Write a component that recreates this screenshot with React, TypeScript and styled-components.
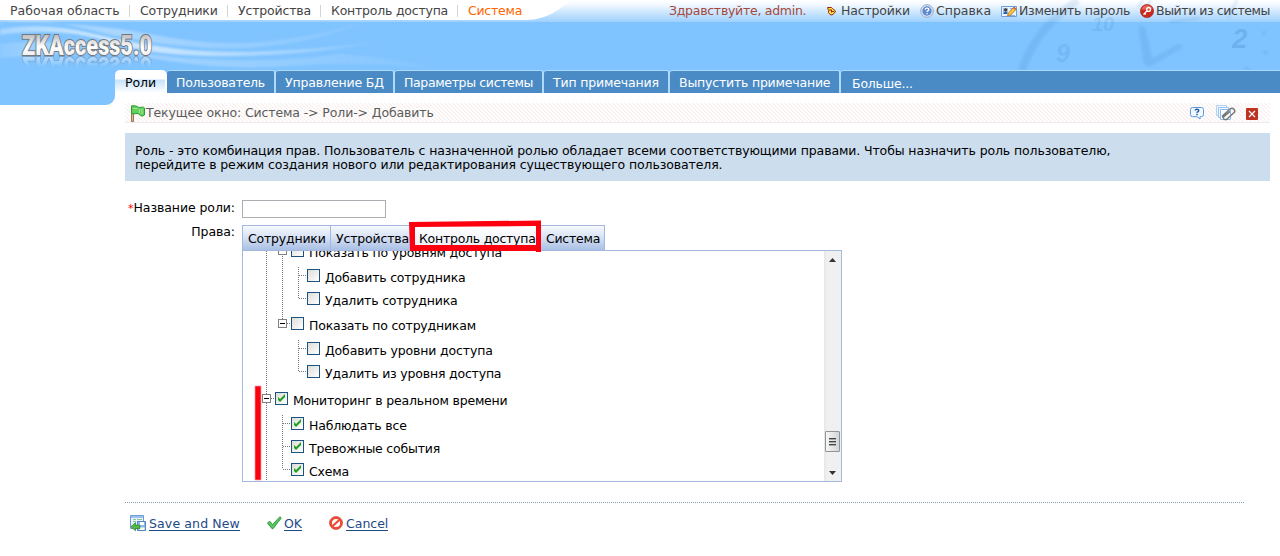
import { ReactNode } from "react";
import styled, { createGlobalStyle, css } from "styled-components";

const GlobalStyle = createGlobalStyle`
  * {
    box-sizing: border-box;
  }
  body {
    margin: 0;
    background: #ffffff;
    font-family: Verdana, "DejaVu Sans", sans-serif;
    font-size: 12.5px;
    line-height: 15px;
    color: #000000;
  }
  ul {
    margin: 0;
    padding: 0;
    list-style: none;
  }
  svg {
    display: block;
    flex: none;
  }
`;

const Page = styled.div`
  width: 1280px;
  height: 556px;
  overflow: hidden;
`;

/* header */

const Header = styled.header`
  position: relative;
  height: 93px;
  display: flex;
  flex-direction: column;
  background: #7fc3ff;
`;

const HeaderArt = styled.svg`
  position: absolute;
  top: 0;
  left: 0;
`;

const TopBar = styled.div`
  position: relative;
  height: 22px;
  display: flex;
  justify-content: space-between;
  padding: 3px 10px 0 0;
`;

const Menu = styled.nav`
  display: flex;
  align-items: flex-start;
`;

const MenuItem = styled.a<{ $w: number; $ls?: number; $active?: boolean }>`
  width: ${(props) => props.$w}px;
  padding-left: 10px;
  white-space: nowrap;
  letter-spacing: ${(props) => props.$ls || 0}px;
  color: ${(props) => (props.$active ? "#ff6600" : "#444444")};
`;

const Divider = styled.i`
  width: 1px;
  height: 12px;
  margin-top: 2px;
  background: #d3d3d3;
`;

const UserMenu = styled.div`
  display: flex;
  align-items: flex-start;
`;

const Hello = styled.span`
  width: 157px;
  color: #a5493c;
  letter-spacing: -0.27px;
  white-space: nowrap;
`;

const UserLink = styled.a<{ $w: number; $gap: number; $ls: number }>`
  display: flex;
  width: ${(props) => props.$w}px;
  gap: ${(props) => props.$gap}px;
  color: #444444;
  letter-spacing: ${(props) => props.$ls}px;
  white-space: nowrap;
`;

const LogoBox = styled.div`
  position: relative;
  height: 48px;
  padding: 8px 0 0 20px;
`;

const TabBar = styled.nav`
  position: relative;
  display: flex;
  height: 23px;
  margin-left: 115px;
  color: #ffffff;
`;

const Tab = styled.a<{ $w: number; $ls: number; $active?: boolean }>`
  width: ${(props) => props.$w}px;
  padding: 4px 0 0 9px;
  white-space: nowrap;
  letter-spacing: ${(props) => props.$ls}px;
  background: #4a8bc5;
  border-top: 1px solid #aedaff;
  border-right: 2px solid #aedaff;
  border-radius: 3px 3px 0 0;
  ${(props) =>
    props.$active &&
    css`
      color: #000000;
      padding-left: 10px;
      border-color: #ffffff;
      border-radius: 5px 5px 0 0;
      background: linear-gradient(#ffffff 0 8px, #c5e2fb 9px, #ffffff);
    `}
`;

const MoreTab = styled.a`
  flex: 1;
  padding: 5px 0 0 11px;
  letter-spacing: -0.2px;
  background: #4a8bc5;
  border-top: 1px solid #aedaff;
  border-radius: 3px 0 0 0;
`;

const Notch = styled.div`
  width: 115px;
  height: 12px;
  background: #7fc3ff;
  border-radius: 0 0 9px 0;
`;

/* content */

const Content = styled.main`
  margin: -2px 10px 0 125px;
`;

const Crumb = styled.div`
  display: flex;
  align-items: flex-start;
  height: 20px;
  padding: 2px 12px 0 5px;
  color: #5b5b5b;
  letter-spacing: -0.12px;
  background: repeating-linear-gradient(45deg, #fff 0 1.414px, #faf3f1 1.414px 2.828px);
  border-bottom: 1px solid #ececec;
`;

const CrumbText = styled.span`
  flex: 1;
`;

const CrumbTools = styled.div`
  display: flex;
  gap: 10px;
`;

const Info = styled.p`
  height: 48px;
  margin: 10px 0 0;
  padding: 11px 10px 0;
  line-height: 14px;
  letter-spacing: -0.115px;
  background: #ccddee;
`;

const Field = styled.div`
  display: flex;
`;

const FieldLabel = styled.label`
  width: 117px;
  padding-right: 7px;
  text-align: right;
  letter-spacing: -0.08px;
  white-space: nowrap;
`;

const Required = styled.span`
  color: #ff0000;
  font-size: 11px;
`;

const NameField = styled(Field)`
  height: 25px;
  margin-top: 19px;
`;

const Input = styled.input`
  width: 144px;
  height: 18px;
  border: 1px solid #abadb3;
  padding: 0;
`;

const RightsBox = styled.div`
  position: relative;
`;

const RightsLabel = styled(FieldLabel)`
  margin-top: -1px;
`;

const RightsTabs = styled.div`
  display: flex;
  height: 25px;
`;

const RightsTab = styled.a<{ $w: number; $ls: number; $active?: boolean }>`
  width: ${(props) => props.$w}px;
  padding: 5px 0 0 5px;
  letter-spacing: ${(props) => props.$ls}px;
  white-space: nowrap;
  border: 1px solid #a3b8dc;
  border-width: 1px 1px 0 0;
  background: ${(props) =>
    props.$active ? "linear-gradient(#ffffff, #e9ecf6)" : "linear-gradient(#f6f9fe, #d5e0f3 50%, #a9bfe5)"};
  &:first-child {
    border-left-width: 1px;
  }
`;

const Panel = styled.div`
  display: flex;
  width: 600px;
  height: 232px;
  overflow: hidden;
  border: 1px solid #a3b8dc;
`;

const Marks = styled.svg`
  position: absolute;
  top: -5px;
  left: 0;
`;

const dots = css`
  background-image: linear-gradient(#777 50%, transparent 50%);
  background-size: 1px 2px;
`;

const Tree = styled.ul`
  position: relative;
  flex: 1;
  height: 246px;
  margin-top: -14px;
  padding-left: 19px;
  &::before {
    content: "";
    position: absolute;
    left: 23px;
    top: 0;
    bottom: 0;
    width: 1px;
    ${dots}
  }
`;

const Branch = styled.ul<{ $tail?: number }>`
  position: relative;
  margin-left: 16px;
  padding: 2px 0;
  &::before {
    content: "";
    position: absolute;
    left: 4px;
    top: 5px;
    bottom: ${(props) => props.$tail ?? 14}px;
    width: 1px;
    ${dots}
  }
`;

const NodeRow = styled.div`
  position: relative;
  display: flex;
  align-items: center;
  height: 23px;
`;

const Toggle = styled.i`
  display: flex;
  align-items: center;
  justify-content: center;
  width: 9px;
  height: 9px;
  border: 1px solid #808080;
  background: #ffffff;
  &::after {
    content: "";
    width: 5px;
    height: 1px;
    background: #000000;
  }
`;

const Stem = styled.i<{ $leaf: boolean }>`
  width: ${(props) => (props.$leaf ? 8 : 4)}px;
  height: 1px;
  margin-left: ${(props) => (props.$leaf ? 5 : 0)}px;
  background-image: linear-gradient(90deg, #777 50%, transparent 50%);
  background-size: 2px 1px;
`;

const Box = styled.span`
  width: 13px;
  height: 13px;
  margin-right: 5px;
  border: 1px solid #1c5180;
  background: linear-gradient(135deg, #dcdcd7, #ffffff);
`;

const NodeText = styled.span<{ $ls?: number }>`
  padding-top: 3px;
  white-space: nowrap;
  letter-spacing: ${(props) => props.$ls ?? -0.19}px;
`;

const Scrollbar = styled.div`
  display: flex;
  flex-direction: column;
  align-items: center;
  width: 17px;
  padding: 7px 1px 6px 0;
  background: linear-gradient(90deg, #e6e6e6, #f0f0f0 3px, #f0f0f0);
`;

const Thumb = styled.div`
  display: flex;
  flex-direction: column;
  align-items: center;
  justify-content: center;
  gap: 1px;
  width: 15px;
  height: 21px;
  margin: auto 0 19px;
  border: 1px solid #8f9494;
  border-radius: 1px;
  background: linear-gradient(90deg, #f7f7f7, #d3d5d4);
`;

const Grip = styled.i`
  width: 7px;
  height: 2px;
  background: linear-gradient(#3f4444 50%, #a8a8a8 50%);
`;

const Actions = styled.footer`
  display: flex;
  width: 1119px;
  margin-top: 20px;
  padding: 13px 0 0 5px;
  background: repeating-linear-gradient(90deg, #8b9cb8 0 1px, transparent 1px 2px) top / 100% 1px no-repeat;
`;

const Action = styled.a<{ $w: number; $gap: number }>`
  display: flex;
  gap: ${(props) => props.$gap}px;
  width: ${(props) => props.$w}px;
  color: #1e4a86;
  white-space: nowrap;
`;

const ActionText = styled.span<{ $ls?: number }>`
  height: 15px;
  margin-top: 1px;
  letter-spacing: ${(props) => props.$ls || 0}px;
  border-bottom: 1px solid #1e4a86;
`;

/* icons */

const SettingsIcon = () => (
  <svg width="14" height="16" viewBox="0 0 14 16">
    <path d="M1.500 4.500h4l1 1 3 2.500-1 2-2.500 2-2-.5-1.500-2v-2z" fill="#ffe93b" stroke="#a5200c" />
    <path d="M3 7h2M5 8.500h3M5.500 6.500v3" fill="none" stroke="#a5200c" />
  </svg>
);

const HelpIcon = () => (
  <svg width="14" height="16" viewBox="0 0 14 16">
    <circle cx="7" cy="8" r="6.300" fill="#dfe8f5" stroke="#96a9c4" />
    <circle cx="7" cy="8" r="4.700" fill="#5c8ad0" />
    <path d="M5.200 6.700q.2-1.700 1.900-1.600 1.800.1 1.700 1.500-.1.900-1.700 1.700v.6M7.100 10v1.300" fill="none" stroke="#fff" strokeWidth="1.300" />
  </svg>
);

const PasswordIcon = () => (
  <svg width="16" height="16" viewBox="0 0 16 16">
    <path d="M.5 3.500h15v10H.5z" fill="#e9f2ff" stroke="#6f9ddb" />
    <path d="M2 5h5v6H2z" fill="#8fc2f4" />
    <path d="M2.500 11q0-2.500 2-2.500t2 2.500z" fill="#355f9e" />
    <circle cx="4.600" cy="6.800" r="1.600" fill="#573111" />
    <path d="M9 5.500h5M9 12.500h5" stroke="#88aee0" />
    <path d="M6.500 13l1-3L13 4l2.300 2-5.600 6z" fill="#ffc841" stroke="#a8640e" strokeWidth=".8" />
    <path d="M12 5l2.300 2 1-1L13 4z" fill="#e0573f" />
  </svg>
);

const LogoutIcon = () => (
  <svg width="14" height="16" viewBox="0 0 14 16">
    <circle cx="7" cy="8" r="6.600" fill="#c92a20" stroke="#a31c14" strokeWidth=".6" />
    <path d="M1.400 6.500Q2.500 2.300 7 2.300t5.600 4Q7 7 1.400 6.500z" fill="#ee786d" opacity=".7" />
    <circle cx="8.600" cy="6.400" r="1.900" fill="none" stroke="#fff" strokeWidth="1.300" />
    <path d="M7.200 7.800L3.500 11.500M4.500 10.300l1.200 1.200" stroke="#fff" strokeWidth="1.300" />
  </svg>
);

const FlagIcon = () => (
  <svg width="16" height="17" viewBox="0 0 16 17">
    <path d="M1.500 1h2v15.500h-2z" fill="#d9b79b" stroke="#8c5a35" strokeWidth=".8" />
    <path d="M1.500 1Q5 .2 7 1.400t2 1.100l3-.3q2-.2 2.500.8V10q-2 1.800-4 .6L8 8.500l-6.500.4z" fill="#63cf5c" stroke="#2f9a3a" />
    <path d="M3.500 3.500h4M9.500 4v4M12 4v5" stroke="#a3e898" />
  </svg>
);

const BubbleIcon = () => (
  <svg width="16" height="16" viewBox="0 0 16 16">
    <path d="M3.500 2.500h9q2 0 2 2v5q0 2-2 2.200h-1.500V14l-3-2.300H3.500q-2 0-2-2.200v-5q0-2 2-2z" fill="#f2f8ff" stroke="#5b9bdd" />
    <path d="M6.200 5.500q0-1.300 1.900-1.200 1.800.1 1.700 1.400Q9.600 6.700 8 7.300v.5M8 8.800v1.400" fill="none" stroke="#21599b" strokeWidth="1.400" />
  </svg>
);

const AttachIcon = () => (
  <svg width="21" height="17" viewBox="0 0 21 17">
    <path d="M1.500.5h10v10h-10z" fill="#eef6ff" stroke="#b4d4f4" />
    <path d="M3.500 2.500h10v10h-10z" fill="#eef6ff" stroke="#9cc6f0" />
    <path d="M5.500 4.500h10v10h-10z" fill="#fafdff" stroke="#8abbee" />
    <path d="M8 12.500l-.5-1.500L15 4q2-1.500 4 .3 1.700 2-.2 3.500l-7 6.400q-1.800 1.200-3-.3-1-1.500.3-2.500l6-5" fill="none" stroke="#777" strokeWidth="1.500" />
  </svg>
);

const CloseIcon = () => (
  <svg width="12" height="16" viewBox="0 0 12 16">
    <rect y="3" width="12" height="12" rx="1" fill="#bd3322" />
    <path d="M3 6l6 6M9 6l-6 6" stroke="#fff" strokeWidth="1.200" />
  </svg>
);

const SaveIcon = () => (
  <svg width="16" height="17" viewBox="0 0 16 17">
    <path d="M.5.500h13v13H.5z" fill="#e8f3ff" stroke="#6e9cd6" />
    <path d="M1 1h12v2H1z" fill="#9cc3ee" />
    <path d="M3 4.500h3M7 4.500h5M3 6.500h3M7 6.500h5" stroke="#8fc592" />
    <path d="M7.500 6.500h8v9h-8z" fill="#8db9ef" stroke="#5585c4" />
    <path d="M10 7h4v3h-4zM9.500 12.500h5v2.500h-5z" fill="#fff" />
    <path d="M.8 11.700l4.700-4v2.400h4.400v3.400H5.500v2.200z" fill="#53b848" stroke="#2f8b2c" strokeWidth=".8" />
  </svg>
);

const OkIcon = () => (
  <svg width="16" height="16" viewBox="0 0 16 16">
    <path d="M.5 8.200l2-2.200 3 3.500L13 1.700l1.200 1.500L6 13.700H5z" fill="#58c561" stroke="#2b9438" strokeWidth=".9" />
  </svg>
);

const CancelIcon = () => (
  <svg width="14" height="16" viewBox="0 0 14 16">
    <circle cx="7" cy="8" r="5.300" fill="#fff" stroke="#ee4c35" strokeWidth="2.400" />
    <circle cx="7" cy="8" r="6.500" fill="none" stroke="#c23322" strokeWidth=".6" />
    <path d="M3.500 11.300L10.500 4.700" stroke="#ee4c35" strokeWidth="2.200" />
  </svg>
);

const Check = () => (
  <svg width="11" height="11" viewBox="0 0 11 11">
    <path d="M2 4v3l2 2 5-5V1L4 6z" fill="#21a121" />
  </svg>
);

const Logo = () => (
  <svg width="140" height="38" viewBox="0 0 140 38">
    <defs>
      <linearGradient id="metal" x1="0" y1="0" x2="0" y2="1">
        <stop offset=".2" stopColor="#c4c4c6" />
        <stop offset=".55" stopColor="#fff" />
        <stop offset="1" stopColor="#e4e4e4" />
      </linearGradient>
      <linearGradient id="fade" gradientUnits="userSpaceOnUse" x1="0" y1="25" x2="0" y2="14">
        <stop offset="0" stopColor="#fff" stopOpacity=".5" />
        <stop offset="1" stopColor="#fff" stopOpacity="0" />
      </linearGradient>
      <mask id="mirror">
        <rect width="140" height="30" fill="url(#fade)" />
      </mask>
    </defs>
    <text
      id="brand"
      x="2"
      y="24.500"
      textLength="130"
      lengthAdjust="spacingAndGlyphs"
      fontFamily="Impact, Roboto, sans-serif"
      fontWeight="900"
      fontSize="27"
      fill="url(#metal)"
      stroke="#74777d"
      strokeWidth="2"
      paintOrder="stroke"
    >
      ZKAccess5.0
    </text>
    <g transform="translate(0 51) scale(1 -1)">
      <use href="#brand" mask="url(#mirror)" />
    </g>
  </svg>
);

const Backdrop = () => (
  <HeaderArt width="1280" height="93" viewBox="0 0 1280 93">
    <defs>
      <linearGradient id="sky" x1="0" y1="0" x2="0" y2="1">
        <stop offset="0" stopColor="#fff" />
        <stop offset=".2" stopColor="#f3f9ff" />
        <stop offset="1" stopColor="#9dd0fd" />
      </linearGradient>
      <linearGradient id="wave" x1="0" x2="1">
        <stop offset="0" stopColor="#fff" stopOpacity=".3" />
        <stop offset=".3" stopColor="#fff" stopOpacity=".65" />
        <stop offset="1" stopColor="#fff" stopOpacity=".1" />
      </linearGradient>
      <filter id="soft">
        <feGaussianBlur stdDeviation="1.200" />
      </filter>
    </defs>
    <rect width="1280" height="22" fill="url(#sky)" />
    <g fill="url(#wave)" filter="url(#soft)">
      <path d="M0 29Q45 22 90 33T180 49T290 50T382 41Q320 54 240 56T110 42T0 35z" />
      <path d="M0 22Q90 22 150 34T260 42T370 20Q310 46 240 48T90 30T0 26z" opacity=".5" />
      <path d="M40 28Q120 55 200 59T340 54Q400 58 440 70Q370 60 290 66T120 52z" opacity=".4" />
      <path d="M0 44Q30 40 70 43T150 54Q80 50 0 58z" opacity=".4" />
    </g>
    <path d="M0 0H572C560 7 550 20 525 20H0z" fill="#fff" />
    <g fill="#2c79b7" stroke="#2c79b7" opacity=".12" filter="url(#soft)">
      <path d="M1022 70Q1036 28 1078 0" fill="none" strokeWidth="8" />
      <path d="M1139 27q5-2 6 2l7 30 27-15 4 3-33 19q-5 0-6-4z" />
      <path d="M1262 34l4-2M1263 52l5 1M1170 22l30-4M1244 68l6 2M1228 18l9-18M1138 8l5-8M1146 8l5-8" strokeWidth="3" />
    </g>
    <g fill="#2c79b7" opacity=".22" fontFamily="Liberation Sans" fontStyle="italic" fontWeight="bold">
      <text x="1056" y="62" fontSize="25" opacity=".6">9</text>
      <text x="1092" y="31" fontSize="20" opacity=".6">10</text>
      <text x="1232" y="48" fontSize="28">2</text>
    </g>
  </HeaderArt>
);

interface INode {
  text: string;
  ls?: number;
  checked?: boolean;
  children?: ReactNode;
}

function Node({ text, ls, checked, children }: INode) {
  return (
    <li>
      <NodeRow>
        {children && <Toggle />}
        <Stem $leaf={!children} />
        <Box>{checked && <Check />}</Box>
        <NodeText $ls={ls}>{text}</NodeText>
      </NodeRow>
      {children && <Branch>{children}</Branch>}
    </li>
  );
}

function App() {
  return (
    <Page>
      <GlobalStyle />
      <Header>
        <Backdrop />
        <TopBar>
          <Menu>
            <MenuItem $w={129}>Рабочая область</MenuItem>
            <Divider />
            <MenuItem $w={97} $ls={-0.2}>Сотрудники</MenuItem>
            <Divider />
            <MenuItem $w={92} $ls={-0.17}>Устройства</MenuItem>
            <Divider />
            <MenuItem $w={136} $ls={-0.22}>Контроль доступа</MenuItem>
            <Divider />
            <MenuItem $w={80} $ls={-0.25} $active>Система</MenuItem>
          </Menu>
          <UserMenu>
            <Hello>Здравствуйте, admin.</Hello>
            <UserLink $w={94} $gap={1} $ls={-0.18}><SettingsIcon />Настройки</UserLink>
            <UserLink $w={81} $gap={2} $ls={0}><HelpIcon />Справка</UserLink>
            <UserLink $w={139} $gap={2} $ls={-0.25}><PasswordIcon />Изменить пароль</UserLink>
            <UserLink $w={130} $gap={2} $ls={-0.43}><LogoutIcon />Выйти из системы</UserLink>
          </UserMenu>
        </TopBar>
        <LogoBox>
          <Logo />
        </LogoBox>
        <TabBar>
          <Tab $w={52} $ls={-0.1} $active>Роли</Tab>
          <Tab $w={109} $ls={-0.26}>Пользователь</Tab>
          <Tab $w={119} $ls={-0.14}>Управление БД</Tab>
          <Tab $w={149} $ls={-0.35}>Параметры системы</Tab>
          <Tab $w={126} $ls={-0.16}>Тип примечания</Tab>
          <Tab $w={171} $ls={-0.2}>Выпустить примечание</Tab>
          <MoreTab>Больше...</MoreTab>
        </TabBar>
      </Header>
      <Notch />
      <Content>
        <Crumb>
          <FlagIcon />
          <CrumbText>Текущее окно: Система -&gt; Роли-&gt; Добавить</CrumbText>
          <CrumbTools>
            <BubbleIcon />
            <AttachIcon />
            <CloseIcon />
          </CrumbTools>
        </Crumb>
        <Info>
          Роль - это комбинация прав. Пользователь с назначенной ролью обладает всеми соответствующими правами. Чтобы назначить роль пользователю,
          <br />
          перейдите в режим создания нового или редактирования существующего пользователя.
        </Info>
        <NameField>
          <FieldLabel><Required>*</Required>Название роли:</FieldLabel>
          <Input />
        </NameField>
        <Field>
          <RightsLabel>Права:</RightsLabel>
          <RightsBox>
            <RightsTabs>
              <RightsTab $w={89} $ls={-0.2}>Сотрудники</RightsTab>
              <RightsTab $w={83} $ls={-0.17}>Устройства</RightsTab>
              <RightsTab $w={127} $ls={-0.25} $active>Контроль доступа</RightsTab>
              <RightsTab $w={64} $ls={-0.25}>Система</RightsTab>
            </RightsTabs>
            <Panel>
              <Tree>
                <li>
                  <Branch $tail={64}>
                    <Node text="Показать по уровням доступа">
                      <Node text="Добавить сотрудника" />
                      <Node text="Удалить сотрудника" />
                    </Node>
                    <Node text="Показать по сотрудникам" ls={-0.21}>
                      <Node text="Добавить уровни доступа" ls={-0.15} />
                      <Node text="Удалить из уровня доступа" />
                    </Node>
                  </Branch>
                </li>
                <Node text="Мониторинг в реальном времени" checked>
                  <Node text="Наблюдать все" checked />
                  <Node text="Тревожные события" checked />
                  <Node text="Схема" checked />
                </Node>
              </Tree>
              <Scrollbar>
                <svg width="7" height="4"><path d="M0 4L3.500 0L7 4z" fill="#333" /></svg>
                <Thumb><Grip /><Grip /><Grip /></Thumb>
                <svg width="7" height="4"><path d="M0 0L3.500 4L7 0z" fill="#333" /></svg>
              </Scrollbar>
            </Panel>
            <Marks width="310" height="266" viewBox="0 0 310 266">
              <path d="M167 2L299 .5V32H294V31H168z M173 7V25H294V6z" fill="#fc0010" fillRule="evenodd" />
              <path d="M13 166h6v94h-6z" fill="#fc0010" stroke="#ff9aa4" strokeWidth=".7" />
            </Marks>
          </RightsBox>
        </Field>
        <Actions>
          <Action $w={137} $gap={3}><SaveIcon /><ActionText $ls={0.13}>Save and New</ActionText></Action>
          <Action $w={62} $gap={1}><OkIcon /><ActionText>OK</ActionText></Action>
          <Action $w={80} $gap={3}><CancelIcon /><ActionText>Cancel</ActionText></Action>
        </Actions>
      </Content>
    </Page>
  );
}

export default App;
